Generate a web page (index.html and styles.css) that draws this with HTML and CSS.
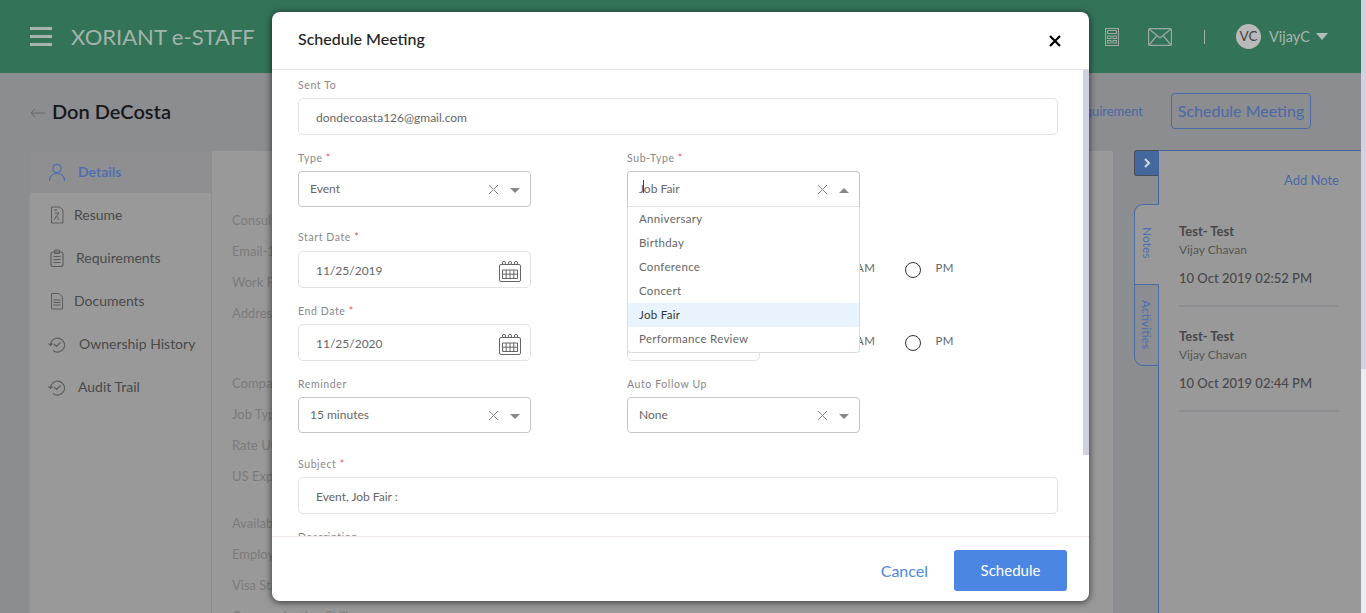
FILE: index.html

```html
<!DOCTYPE html>
<html lang="en">
<head>
  <meta charset="UTF-8" />
  <meta name="viewport" content="width=device-width, initial-scale=1.0"/>
  <title>Schedule Meeting</title>
  <link rel="stylesheet" href="styles.css">
</head>
<body>
  <div class="app">
    <div class="page">
      <header class="topbar">
        <div class="burger"><span></span><span></span><span></span></div>
        <div class="brand">XORIANT e-STAFF</div>
        <div class="topbar-right">
          <svg class="ico-calc" viewBox="0 0 14 18" fill="none" stroke="#9fa8a4" stroke-width="1">
            <rect x="0.5" y="0.5" width="13" height="17"/>
            <rect x="2.5" y="2.5" width="9" height="3"/>
            <rect x="2.5" y="8" width="3.5" height="2.5"/>
            <rect x="8" y="8" width="3.5" height="2.5"/>
            <rect x="2.5" y="12.5" width="3.5" height="2.5"/>
            <rect x="8" y="12.5" width="3.5" height="2.5"/>
          </svg>
          <svg class="ico-mail" viewBox="0 0 24 18" fill="none" stroke="#9fa8a4" stroke-width="1.2">
            <rect x="0.6" y="0.6" width="22.8" height="16.8" rx="1.5"/>
            <path d="M1 1l11 9 11-9M1 17l8-9.5M23 17l-8-9.5"/>
          </svg>
          <span class="divider"></span>
          <span class="avatar">VC</span>
          <span class="username">VijayC</span>
          <span class="user-caret"></span>
        </div>
      </header>

      <div class="title-row">
        <svg class="back" viewBox="0 0 15 10" fill="none" stroke="#66686c" stroke-width="1"><path d="M15 5H1M5 1L1 5l4 4"/></svg>
        <h1>Don DeCosta</h1>
        <div class="title-actions">
          <a class="link">Add Requirement</a>
          <a class="btn-outline">Schedule Meeting</a>
        </div>
      </div>

      <div class="content">
        <nav class="sidebar">
          <div class="nav-item active">
            <svg viewBox="0 0 18 18" fill="none" stroke="#4f6fb0" stroke-width="1.2"><circle cx="9" cy="5.5" r="4.2"/><path d="M1.5 18c0-5 3-7.5 7.5-7.5s7.5 2.5 7.5 7.5"/></svg>
            <span class="t-details">Details</span>
          </div>
          <div class="nav-item">
            <svg viewBox="0 0 18 18" fill="none" stroke="#5c5c5c" stroke-width="1"><path d="M3.5 1h8l3.5 3v13H3.5z"/><path d="M6 4h3M7 7h4L8.5 10l2.5 4M8.5 10L6 14"/></svg>
            <span class="t-resume">Resume</span>
          </div>
          <div class="nav-item">
            <svg viewBox="0 0 18 18" fill="none" stroke="#5c5c5c" stroke-width="1.1"><rect x="3" y="3" width="12" height="14.5" rx="2"/><rect x="6.5" y="1" width="5" height="3.5" rx="1"/><path d="M5.5 7.5h7M5.5 10.5h7M5.5 13.5h7"/></svg>
            <span class="t-req">Requirements</span>
          </div>
          <div class="nav-item">
            <svg viewBox="0 0 18 18" fill="none" stroke="#5c5c5c" stroke-width="1"><path d="M3.5 1.5H11L14.5 5v12h-11z"/><path d="M5.5 8h7M5.5 10.5h7M5.5 13h7"/></svg>
            <span class="t-docs">Documents</span>
          </div>
          <div class="nav-item">
            <svg viewBox="0 0 18 18" fill="none" stroke="#5c5c5c" stroke-width="1.1"><path d="M2.5 10a7 7 0 1 1 2.5 5.5M.5 8.5l2 2 2-2M6 9l2.5 2.5 4-4"/></svg>
            <span class="t-owner">Ownership History</span>
          </div>
          <div class="nav-item">
            <svg viewBox="0 0 18 18" fill="none" stroke="#5c5c5c" stroke-width="1.1"><path d="M2.5 10a7 7 0 1 1 2.5 5.5M.5 8.5l2 2 2-2M6 9l2.5 2.5 4-4"/></svg>
            <span class="t-audit">Audit Trail</span>
          </div>
        </nav>

        <main class="details">
          <div class="group">
            <div>Consultant Name</div>
            <div>Email-1</div>
            <div>Work Phone</div>
            <div>Address</div>
          </div>
          <div class="group">
            <div>Company</div>
            <div>Job Type</div>
            <div>Rate UOM</div>
            <div>US Experience</div>
          </div>
          <div class="group">
            <div>Availability</div>
            <div>Employment</div>
            <div>Visa Status</div>
            <div>Communication Skills</div>
          </div>
        </main>

        <div class="tabs">
          <div class="tab-toggle">
            <svg viewBox="0 0 8 10" fill="none" stroke="#d5d8de" stroke-width="2"><path d="M2 1l4 4-4 4"/></svg>
          </div>
          <div class="tab tab-notes"><span>Notes</span></div>
          <div class="tab tab-activities"><span>Activities</span></div>
        </div>

        <aside class="notes">
          <a class="add-note">Add Note</a>
          <div class="note">
            <div class="note-title">Test- Test</div>
            <div class="note-author">Vijay Chavan</div>
            <div class="note-date">10 Oct 2019 02:52 PM</div>
          </div>
          <div class="note">
            <div class="note-title">Test- Test</div>
            <div class="note-author">Vijay Chavan</div>
            <div class="note-date">10 Oct 2019 02:44 PM</div>
          </div>
        </aside>
      </div>
    </div>
    <div class="page-scroll"><div class="page-thumb"></div></div>
  </div>

  <div class="modal">
    <div class="modal-head">
      <div class="modal-title">Schedule Meeting</div>
      <svg class="close" viewBox="0 0 12 12" fill="none" stroke="#000" stroke-width="2.2"><path d="M1 1l10 10M11 1L1 11"/></svg>
    </div>

    <div class="modal-body">
      <div class="row gap-s">
        <div class="wide">
          <label>Sent To</label>
          <div class="field">dondecoasta126@gmail.com</div>
        </div>
      </div>

      <div class="row cols gap-l">
        <div>
          <label>Type <b>*</b></label>
          <div class="select">Event<i class="clear"></i><i class="arrow"></i></div>
        </div>
        <div class="subtype">
          <label>Sub-Type <b>*</b></label>
          <div class="select open"><em class="caret"></em>Job Fair<i class="clear"></i><i class="arrow up"></i></div>
          <ul class="dropdown">
            <li>Anniversary</li>
            <li>Birthday</li>
            <li>Conference</li>
            <li>Concert</li>
            <li class="selected">Job Fair</li>
            <li>Performance Review</li>
          </ul>
        </div>
      </div>

      <div class="row cols gap-s">
        <div>
          <label class="lbl-date">Start Date <b>*</b></label>
          <div class="field">11/25/2019
            <svg class="cal" viewBox="0 0 22 22" fill="none" stroke="#666" stroke-width="1"><path d="M2 4.5h18A1.5 1.5 0 0 1 21.5 6v14a1.5 1.5 0 0 1-1.5 1.5H2A1.5 1.5 0 0 1 .5 20V6A1.5 1.5 0 0 1 2 4.5z"/><circle cx="5" cy="3" r="1.6"/><circle cx="11" cy="3" r="1.6"/><circle cx="17" cy="3" r="1.6"/><path d="M3.5 10h15v8.5h-15zM3.5 14.2h15M7.2 10v8.5M11 10v8.5M14.8 10v8.5"/></svg>
          </div>
        </div>
        <div>
          <label class="lbl-date"></label>
          <div class="time-row">
            <div class="field time"></div>
            <span class="radio"></span><span class="ampm">AM</span>
            <span class="radio"></span><span class="ampm">PM</span>
          </div>
        </div>
      </div>

      <div class="row cols gap-s">
        <div>
          <label>End Date <b>*</b></label>
          <div class="field">11/25/2020
            <svg class="cal" viewBox="0 0 22 22" fill="none" stroke="#666" stroke-width="1"><path d="M2 4.5h18A1.5 1.5 0 0 1 21.5 6v14a1.5 1.5 0 0 1-1.5 1.5H2A1.5 1.5 0 0 1 .5 20V6A1.5 1.5 0 0 1 2 4.5z"/><circle cx="5" cy="3" r="1.6"/><circle cx="11" cy="3" r="1.6"/><circle cx="17" cy="3" r="1.6"/><path d="M3.5 10h15v8.5h-15zM3.5 14.2h15M7.2 10v8.5M11 10v8.5M14.8 10v8.5"/></svg>
          </div>
        </div>
        <div>
          <label></label>
          <div class="time-row">
            <div class="field time"></div>
            <span class="radio"></span><span class="ampm">AM</span>
            <span class="radio"></span><span class="ampm">PM</span>
          </div>
        </div>
      </div>

      <div class="row cols gap-xl">
        <div>
          <label>Reminder</label>
          <div class="select">15 minutes<i class="clear"></i><i class="arrow"></i></div>
        </div>
        <div>
          <label>Auto Follow Up</label>
          <div class="select">None<i class="clear"></i><i class="arrow"></i></div>
        </div>
      </div>

      <div class="row gap-s">
        <div class="wide">
          <label>Subject <b>*</b></label>
          <div class="field">Event, Job Fair :</div>
        </div>
      </div>

      <div class="row">
        <div class="wide">
          <label>Description</label>
          <div class="field"></div>
        </div>
      </div>

      <div class="modal-scroll"></div>
    </div>

    <div class="modal-foot">
      <a class="cancel">Cancel</a>
      <a class="schedule">Schedule</a>
    </div>
  </div>
</body>
</html>
```

FILE: styles.css

```css
html, body {
  margin: 0;
  padding: 0;
  height: 100%;
  overflow: hidden;
  font-family: Lato, "Open Sans", sans-serif;
}

.app {
  display: flex;
  height: 613px;
  overflow: hidden;
}

.page {
  width: 1361px;
  display: flex;
  flex-direction: column;
  background: #8c8d91;
}

.page-scroll {
  width: 5px;
  background: #eaebf3;
}

.page-thumb {
  height: 369px;
  background: #d0d1e2;
}

/* top bar */
.topbar {
  height: 73px;
  flex: none;
  display: flex;
  align-items: center;
  padding-left: 30px;
  background: #337459;
}

.burger {
  width: 22px;
  height: 19px;
  display: flex;
  flex-direction: column;
  justify-content: space-between;
  margin-right: 19px;
}

.burger span {
  height: 3px;
  background: #a8b4ae;
}

.brand {
  font-size: 22px;
  color: #a3b3ac;
}

.topbar-right {
  margin-left: auto;
  display: flex;
  align-items: center;
  padding-right: 33px;
}

.ico-calc {
  width: 14px;
  height: 18px;
  margin-right: 29px;
}

.ico-mail {
  width: 24px;
  height: 18px;
  margin-right: 32px;
}

.divider {
  width: 1px;
  height: 14px;
  background: #a3b3ac;
  margin-right: 31px;
}

.avatar {
  width: 25px;
  height: 25px;
  border-radius: 50%;
  background: #b9b9b9;
  color: #444;
  font-size: 13.5px;
  line-height: 25px;
  text-align: center;
  margin-right: 8px;
}

.username {
  font-size: 14.5px;
  color: #a9b5af;
}

.user-caret {
  width: 0;
  height: 0;
  border-left: 6px solid transparent;
  border-right: 6px solid transparent;
  border-top: 7px solid #b3bcb7;
  margin-left: 6px;
}

/* title row */
.title-row {
  height: 77px;
  flex: none;
  display: flex;
  align-items: center;
  padding: 0 50px 2px 30px;
  box-sizing: border-box;
}

.back {
  width: 15px;
  height: 10px;
  margin: 4px 7px 0 0;
}

.title-row h1 {
  margin: 0;
  font-size: 20px;
  font-weight: 600;
  color: #17181a;
}

.title-actions {
  margin-left: auto;
  display: flex;
  align-items: center;
}

.link {
  font-size: 13px;
  color: #4a69a5;
  margin-right: 28px;
}

.btn-outline {
  width: 140px;
  height: 36px;
  box-sizing: border-box;
  border: 1px solid #4a6aa5;
  border-radius: 4px;
  text-align: center;
  line-height: 34px;
  font-size: 16px;
  color: #4a69a5;
}

/* content */
.content {
  flex: 1;
  display: flex;
  min-height: 0;
}

.sidebar {
  width: 182px;
  flex: none;
  box-sizing: border-box;
  margin: 1px 0 0 30px;
  background: #999;
  border-right: 1px solid #8e8e8e;
}

.nav-item {
  height: 43px;
  display: flex;
  align-items: center;
  padding-left: 18px;
  font-size: 14px;
  color: #4a4a4c;
}

.nav-item.active {
  height: 41px;
  padding-bottom: 1px;
  background: #8f8f91;
  color: #4f6fb0;
  font-weight: 700;
}

.nav-item svg {
  width: 18px;
  height: 18px;
  flex: none;
}

.t-details { margin-left: 12px; }
.t-resume { margin-left: 8px; }
.t-req { margin-left: 10px; }
.t-docs { margin-left: 8px; }
.t-owner { margin-left: 13px; }
.t-audit { margin-left: 12px; }

.details {
  width: 901px;
  flex: none;
  margin-top: 1px;
  padding: 54px 0 0 20px;
  box-sizing: border-box;
  background: #999;
  font-size: 13px;
  color: #7b7b7b;
}

.group div {
  height: 31px;
  line-height: 31px;
}

.group:first-child {
  margin-bottom: 39px;
}

.group:nth-child(2) {
  margin-bottom: 16px;
}

/* side tabs */
.tabs {
  width: 45px;
  flex: none;
  position: relative;
}

.tab-toggle {
  position: absolute;
  left: 21px;
  top: 0;
  width: 24px;
  height: 26px;
  box-sizing: border-box;
  background: #44689e;
  border: 1px solid #4a4c50;
  border-right: 0;
  border-radius: 3px 0 0 3px;
  display: flex;
  align-items: center;
  justify-content: center;
}

.tab-toggle svg {
  width: 8px;
  height: 10px;
}

.tab {
  position: absolute;
  left: 21px;
  width: 25px;
  box-sizing: border-box;
  border: 1px solid #4a6aa5;
  font-size: 12px;
  color: #4a6fb5;
  display: flex;
  justify-content: center;
  padding-top: 22px;
}

.tab span {
  writing-mode: vertical-rl;
}

.tab-notes {
  top: 54px;
  height: 81px;
  background: #999;
  border-right: 0;
  border-radius: 9px 0 0 0;
}

.tab-activities {
  top: 134px;
  height: 82px;
  padding-top: 15px;
  border-radius: 0 0 0 9px;
}

.notes {
  flex: 1;
  background: #999;
  border-left: 1px solid #45659f;
  border-top: 1px solid #45659f;
  padding: 0 22px 0 20px;
}

.add-note {
  display: block;
  text-align: right;
  font-size: 13px;
  line-height: 16px;
  margin-top: 21px;
  color: #4a69a5;
}

.note {
  color: #48484a;
  height: 105px;
  box-sizing: border-box;
  padding-top: 19px;
  border-bottom: 2px solid #8c8d91;
}

.note:first-of-type {
  margin-top: 14px;
}

.note-title {
  font-size: 13px;
  font-weight: 700;
  line-height: 20px;
}

.note-author {
  font-size: 12px;
  line-height: 18px;
  color: #555;
}

.note-date {
  font-size: 13px;
  font-weight: 500;
  line-height: 20px;
  margin-top: 9px;
}

/* modal */
.modal {
  position: absolute;
  left: 272px;
  top: 12px;
  width: 817px;
  height: 589px;
  background: #fff;
  border-radius: 8px;
  box-shadow: 0 1px 6px 1px rgba(0, 0, 0, 0.55);
  display: flex;
  flex-direction: column;
  overflow: hidden;
}

.modal-head {
  height: 58px;
  flex: none;
  box-sizing: border-box;
  border-bottom: 1px solid #e2e2e2;
  display: flex;
  align-items: center;
  justify-content: space-between;
  padding: 0 28px 4px 26px;
}

.modal-title {
  font-size: 16px;
  font-weight: 500;
  color: #222;
}

.close {
  width: 12px;
  height: 12px;
  margin-top: 5px;
}

.modal-body {
  flex: 1;
  min-height: 0;
  position: relative;
  overflow: hidden;
  padding: 8px 0 0 26px;
}

.modal-scroll {
  position: absolute;
  right: 0;
  top: 0;
  width: 6px;
  height: 385px;
  background: #cfd0e0;
}

.modal-foot {
  height: 65px;
  flex: none;
  box-sizing: border-box;
  border-top: 1px solid #f0e6e8;
  display: flex;
  align-items: center;
  justify-content: flex-end;
  padding: 2px 22px 0 0;
}

.cancel {
  font-size: 16px;
  color: #4d86e4;
  margin-right: 26px;
}

.schedule {
  width: 113px;
  height: 41px;
  background: #4c86e4;
  border-radius: 3px;
  color: #fff;
  font-size: 15px;
  line-height: 41px;
  text-align: center;
}

/* form */
.row {
  width: 760px;
}

.cols {
  display: grid;
  grid-template-columns: 233px 233px;
  column-gap: 96px;
}

.gap-s { margin-bottom: 16px; }
.gap-l { margin-bottom: 23px; }
.gap-xl { margin-bottom: 24px; }

label {
  display: block;
  height: 14px;
  line-height: 14px;
  margin-bottom: 6px;
  font-size: 10.5px;
  letter-spacing: 0.6px;
  color: #888;
}

label.lbl-date {
  margin-bottom: 7px;
}

label b {
  color: #e45a5a;
  font-weight: 400;
}

.field, .select {
  position: relative;
  box-sizing: border-box;
  font-size: 12px;
  color: #666;
  background: #fff;
}

.field {
  height: 37px;
  line-height: 37px;
  padding-left: 17px;
  border: 1px solid #e2e2e2;
  border-radius: 5px;
}

.select {
  height: 36px;
  line-height: 34px;
  padding-left: 11px;
  border: 1px solid #c6c6c6;
  border-radius: 4px;
}

.select.open {
  border-bottom-color: #e2e2e2;
  border-radius: 4px 4px 0 0;
}

.cal {
  position: absolute;
  right: 9px;
  top: 8px;
  width: 22px;
  height: 22px;
}

.clear {
  position: absolute;
  right: 32px;
  top: 13px;
  width: 9px;
  height: 9px;
  background:
    linear-gradient(45deg, transparent 45%, #888 45%, #888 55%, transparent 55%),
    linear-gradient(-45deg, transparent 45%, #888 45%, #888 55%, transparent 55%);
}

.arrow {
  position: absolute;
  right: 10px;
  top: 16px;
  width: 0;
  height: 0;
  border-left: 5px solid transparent;
  border-right: 5px solid transparent;
  border-top: 5px solid #888;
}

.arrow.up {
  border-top: 0;
  border-bottom: 5px solid #888;
}

.caret {
  position: absolute;
  left: 15px;
  top: 8px;
  width: 1px;
  height: 13px;
  background: #444;
}

.subtype {
  position: relative;
}

.dropdown {
  position: absolute;
  left: 0;
  right: 0;
  top: 56px;
  z-index: 2;
  margin: 0;
  padding: 0 0 1px;
  list-style: none;
  background: #fff;
  border: 1px solid #dcdcdc;
  border-top: 0;
  border-radius: 0 0 4px 4px;
  font-size: 11.5px;
  letter-spacing: 0.3px;
  color: #666;
}

.dropdown li {
  height: 24px;
  line-height: 24px;
  padding-left: 11px;
}

.dropdown .selected {
  background: #e9f3fd;
  color: #333;
}

.time-row {
  display: flex;
  align-items: center;
  width: 400px;
}

.time {
  width: 133px;
  flex: none;
  margin-right: 66px;
}

.radio {
  width: 14px;
  height: 14px;
  flex: none;
  border: 1px solid #333;
  border-radius: 50%;
  margin-right: 14px;
}

.ampm {
  font-size: 11.5px;
  letter-spacing: 0.5px;
  color: #666;
  margin: -5px 30px 0 0;
}
```
